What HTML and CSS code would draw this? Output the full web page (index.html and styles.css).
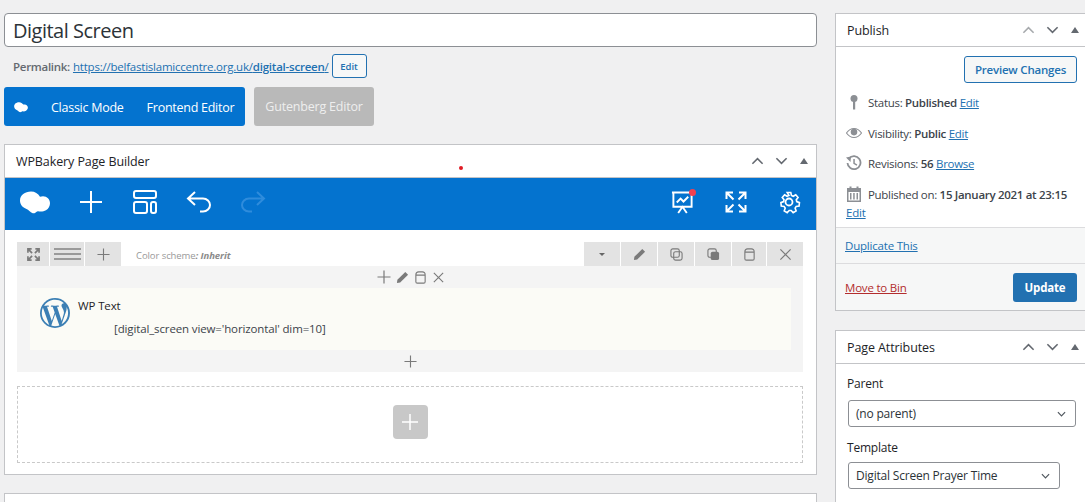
FILE: index.html
```html
<!DOCTYPE html>
<html lang="en">
<head>
<meta charset="utf-8">
<title>Digital Screen</title>
<link rel="stylesheet" href="styles.css">
</head>
<body>
<main class="main">
  <div class="title-input">Digital Screen</div>
  <div class="permalink">
    <b>Permalink:</b>
    <a href="#">https://belfastislamiccentre.org.uk/<b>digital-screen</b>/</a>
    <span class="edit-btn">Edit</span>
  </div>
  <div class="modes">
    <div class="mode-group">
      <svg class="cloud-small" viewBox="0 0 30 24"><use href="#cloud"/></svg>
      <span class="mode-a">Classic Mode</span>
      <span class="mode-b">Frontend Editor</span>
    </div>
    <div class="mode-gray">Gutenberg Editor</div>
  </div>

  <section class="builder">
    <header class="box-head">
      <h2>WPBakery Page Builder</h2>
      <i class="dot"></i>
      <div class="arrows">
        <svg viewBox="0 0 14 8"><path d="M1.5 7 7 1.500 12.500 7"/></svg>
        <svg viewBox="0 0 14 8"><path d="M1.500 1 7 6.500 12.500 1"/></svg>
        <span class="tri"></span>
      </div>
    </header>
    <div class="bluebar">
      <svg class="bb-cloud" viewBox="0 0 30 23"><path id="cloud" fill="#fff" d="M11 .5C5 .5 0 4 0 9.500c0 4 2.500 7 6.500 8.500 1.500.5 2 1.500 3.500 2.500 1.500 1.500 3.500 2.300 5 1.500 1-.5 1.500-1.500 3-1.800 2.500.5 5.500.5 8-1 2.500-1.500 4-4.200 4-7 0-4-3-7-7-7-1 0-2 .2-3 .5C18 2.500 15 .5 11 .5z"/></svg>
      <svg class="bb-ic plus" viewBox="0 0 24 24"><path d="M12 1v22M1 12h22"/></svg>
      <svg class="bb-ic layout" viewBox="0 0 24 24"><rect x="1" y="1" width="22" height="7" rx="2"/><rect x="1" y="12" width="13" height="11" rx="2"/><rect x="18" y="12" width="5" height="11" rx="2"/></svg>
      <svg class="bb-ic undo" viewBox="0 0 26 24"><path d="M9 2 2 8.500 9 15M2 8.500h15c4 0 7 3 7 6.500s-3 6.500-7 6.500h-3"/></svg>
      <svg class="bb-ic redo" viewBox="0 0 26 24"><path d="M17 2l7 6.500L17 15M24 8.500H9c-4 0-7 3-7 6.500s3 6.500 7 6.500h3"/></svg>
      <span class="grow"></span>
      <span class="present">
        <svg class="bb-ic pres" viewBox="0 0 24 24"><path d="M1 1.500h22M2.500 1.500v15h19v-15M6 12l4-4 3 3 5-5M7.500 23l4.500-6.500 4.500 6.500"/></svg>
        <i class="reddot"></i>
      </span>
      <svg class="bb-ic full" viewBox="0 0 22 22"><path d="M1.500 8V1.500H8M1.500 1.500 8.500 8.500M14 1.500h6.500V8M20.500 1.500l-7 7M1.500 14v6.500H8M1.500 20.500l7-7M14 20.500h6.500V14M20.500 20.500l-7-7"/></svg>
      <svg class="bb-ic gear" viewBox="0 0 24 24"><circle cx="12" cy="12" r="3.500"/><path d="M10 1.500h4l.7 3.200 2 .9 2.800-1.700 2.600 3-2 2.500.5 2.100 3 1.200-.4 3.800-3.200.4-1.200 1.900 1.100 3-3.300 2-2.200-2.300h-2.200l-2.200 2.300-3.300-2 1.100-3-1.200-1.900-3.200-.4-.4-3.800 3-1.200.5-2.100-2-2.500 2.600-3 2.800 1.700 2-.9z" transform="translate(1.200 1.200) scale(.9)"/></svg>
    </div>
    <div class="canvas">
      <div class="row-tools">
        <div class="tools-left">
          <span class="tab t-move"><svg viewBox="0 0 14 14"><path class="thick" d="M5.500 5.500 1 1M1 5V1h4M8.500 5.500 13 1M9 1h4v4M5.500 8.500 1 13M1 9v4h4M8.500 8.500 13 13M13 9v4H9"/></svg></span>
          <span class="tab t-lines"><i></i><i></i><i></i></span>
          <span class="tab t-plus"><svg viewBox="0 0 14 14"><path d="M7 .5v13M.5 7h13"/></svg></span>
          <span class="scheme">Color scheme<b>: Inherit</b></span>
        </div>
        <div class="tools-right">
          <span class="tab t-drop"><i class="caret"></i></span>
          <span class="tab t-ic"><svg viewBox="0 0 14 14"><path class="fill" d="M10 1l3 3-8.500 8.500L1 13l.5-3.500z"/></svg></span>
          <span class="tab t-ic"><svg viewBox="0 0 14 14"><rect x="1" y="1" width="9" height="9" rx="2"/><rect x="4" y="4" width="9" height="9" rx="2" class="paper"/></svg></span>
          <span class="tab t-ic"><svg viewBox="0 0 14 14"><rect x="1" y="1" width="9" height="9" rx="2"/><rect x="4" y="4" width="9" height="9" rx="2" class="fill"/></svg></span>
          <span class="tab t-bin"><svg viewBox="0 0 14 14"><path d="M2 4v7.500q0 1.500 1.500 1.500h7q1.500 0 1.500-1.500V4q0-3-3-3H5Q2 1 2 4zM2 4.500h10"/></svg></span>
          <span class="tab t-x"><svg viewBox="0 0 14 14"><path d="M1.500 1.500l11 11M12.500 1.500l-11 11"/></svg></span>
        </div>
      </div>
      <div class="row">
        <div class="col-tools">
          <svg class="ct-plus" viewBox="0 0 14 14"><path d="M7 .5v13M.5 7h13"/></svg>
          <svg viewBox="0 0 14 14"><path class="fill" d="M10 1l3 3-8.500 8.500L1 13l.5-3.500z"/></svg>
          <svg viewBox="0 0 14 14"><path d="M2 4v7.500q0 1.500 1.500 1.500h7q1.500 0 1.500-1.500V4q0-3-3-3H5Q2 1 2 4zM2 4.500h10"/></svg>
          <svg viewBox="0 0 14 14"><path d="M2 2l10 10M12 2 2 12"/></svg>
        </div>
        <div class="element">
          <svg class="wp" viewBox="0 0 30 30"><circle cx="15" cy="15" r="15" fill="#3c7fb4"/><path fill="#fbfbf6" d="M1.800 15c0 5.200 3 9.700 7.400 11.900L2.900 9.600A13.100 13.100 0 0 0 1.800 15zm22.100-.7c0-1.600-.6-2.800-1.100-3.600-.7-1.100-1.300-2-1.300-3.100 0-1.200.9-2.400 2.300-2.400h.2A13.200 13.200 0 0 0 4 7.800h.9c1.400 0 3.500-.2 3.500-.2.700 0 .8 1 .1 1.100 0 0-.7.100-1.500.1l4.800 14.200 2.900-8.600-2-5.600c-.7 0-1.400-.1-1.400-.1-.7 0-.6-1.100.1-1.100 0 0 2.200.2 3.500.2s3.500-.2 3.500-.2c.7 0 .8 1 .1 1.100 0 0-.7.100-1.500.1l4.700 14.100 1.300-4.500c.6-1.800 1-3.100 1-4.200zM15.200 16.100l-3.900 11.500a13.200 13.200 0 0 0 8.100-.2l-.1-.2zM26.500 8.700c.1.400.1.900.1 1.400 0 1.300-.2 2.800-1 4.700l-4 11.500A13.200 13.200 0 0 0 26.500 8.700z"/></svg>
          <div class="el-text">
            <div class="el-name">WP Text</div>
            <div class="el-code">[digital_screen view='horizontal' dim=10]</div>
          </div>
        </div>
        <div class="row-add"><svg viewBox="0 0 14 14"><path d="M7 .5v13M.5 7h13"/></svg></div>
      </div>
      <div class="dropzone">
        <span class="add-btn"><svg viewBox="0 0 16 16"><path d="M8 0v16M0 8h16"/></svg></span>
      </div>
    </div>
  </section>
  <section class="next-box"></section>
</main>

<aside class="side">
  <section class="sbox publish">
    <header class="sbox-head">
      <h2>Publish</h2>
      <div class="arrows">
        <svg class="dim" viewBox="0 0 14 8"><path d="M1.500 7 7 1.500 12.500 7"/></svg>
        <svg viewBox="0 0 14 8"><path d="M1.500 1 7 6.500 12.500 1"/></svg>
        <span class="tri"></span>
      </div>
    </header>
    <div class="pub-body">
      <div class="preview-row"><span class="preview">Preview Changes</span></div>
      <div class="pub-line l-status">
        <svg class="pic" viewBox="0 0 16 16"><circle cx="8" cy="4.500" r="3.500" class="solid"/><rect x="7" y="6" width="2.200" height="9.500" class="solid"/></svg>
        <span>Status: <b>Published</b> <a href="#">Edit</a></span>
      </div>
      <div class="pub-line l-vis">
        <svg class="pic wide" viewBox="0 0 18 12"><path d="M.5 6C3 2.500 6 1 9 1s6 1.500 8.500 5C15 9.500 12 11 9 11S3 9.500.5 6z" fill="none" stroke="#8c8f94" stroke-width="1.200"/><circle cx="9" cy="5" r="3.700" class="solid"/></svg>
        <span>Visibility: <b>Public</b> <a href="#">Edit</a></span>
      </div>
      <div class="pub-line l-rev">
        <svg class="pic" viewBox="0 0 16 16"><path d="M3 3.500A6.500 6.500 0 1 1 1.500 8" fill="none" stroke="#8c8f94" stroke-width="1.800"/><path class="solid" d="M0 2.500 4.500 7 5 1.500zM7.300 4h1.500v4l2.500 1.500-.7 1.200-3.300-2z"/></svg>
        <span>Revisions: <b>56</b> <a href="#">Browse</a></span>
      </div>
      <div class="pub-line l-date">
        <svg class="pic" viewBox="0 0 16 16"><path class="solid" d="M1 2h2.500V.5h2V2h5V.5h2V2H15v14H1zM2.500 6v8.500h11V6z"/><path class="solid" d="M4 7h1.500v6.500H4zM7.200 7h1.500v6.500H7.200zM10.500 7H12v6.500h-1.500z"/></svg>
        <span>Published on: <b>15 January 2021 at 23:15</b></span>
      </div>
      <div class="pub-edit"><a href="#">Edit</a></div>
    </div>
    <div class="pub-dup"><a href="#">Duplicate This</a></div>
    <div class="pub-actions">
      <a href="#" class="trash">Move to Bin</a>
      <span class="update">Update</span>
    </div>
  </section>
  <section class="sbox attrs">
    <header class="sbox-head">
      <h2>Page Attributes</h2>
      <div class="arrows">
        <svg viewBox="0 0 14 8"><path d="M1.500 7 7 1.500 12.500 7"/></svg>
        <svg viewBox="0 0 14 8"><path d="M1.500 1 7 6.500 12.500 1"/></svg>
        <span class="tri"></span>
      </div>
    </header>
    <div class="attr-body">
      <div class="attr-label">Parent</div>
      <div class="sel sel-parent"><span>(no parent)</span><svg viewBox="0 0 10 6"><path d="M1 1l4 4 4-4"/></svg></div>
      <div class="attr-label l2">Template</div>
      <div class="sel sel-tpl"><span>Digital Screen Prayer Time</span><svg viewBox="0 0 10 6"><path d="M1 1l4 4 4-4"/></svg></div>
    </div>
  </section>
</aside>
</body>
</html>
```
FILE: styles.css
```css
* { box-sizing: border-box; }
html, body { height: 502px; overflow: hidden; }
body {
  margin: 0;
  padding: 13px 0 0 4px;
  display: flex;
  gap: 18px;
  background: #f0f0f1;
  font-family: "Open Sans", "Noto Sans", sans-serif;
  font-size: 12px;
  letter-spacing: -0.2px;
  color: #3c434a;
}
a { color: #2271b1; }
h2 { margin: 0; font-size: 12.500px; font-weight: 400; color: #1d2327; letter-spacing: -0.1px; }
svg { display: block; fill: none; stroke: #7a7a7a; }
svg .fill { fill: #7a7a7a; stroke: none; }
svg .solid { fill: #8c8f94; stroke: none; }
.main { width: 813px; flex: none; }
.title-input {
  height: 34px; border: 1px solid #8c8f94; border-radius: 4px; background: #fff;
  font-size: 20px; line-height: 34px; padding-left: 8px; color: #2c3338; letter-spacing: -.5px;
}
.permalink { display: flex; align-items: center; height: 24px; margin-top: 7px; padding-left: 9px; font-size: 11.500px; color: #646970; letter-spacing: -.28px; }
.permalink b { font-weight: 600; }
.permalink a { margin-left: 3px; letter-spacing: -.22px; }
.edit-btn {
  margin-left: 3px; width: 35px; height: 24px; border: 1px solid #2271b1; border-radius: 3px;
  background: #f6f7f7; color: #2271b1; font-size: 9.500px; font-weight: 600; text-align: center; line-height: 23px; letter-spacing: 0;
}
.modes { display: flex; gap: 9px; margin-top: 9px; height: 39px; }
.mode-group {
  width: 241px; background: #0473cf; border-radius: 3px; color: #fff; display: flex; align-items: center;
  font-size: 12.500px; padding-top: 1px; letter-spacing: -.26px;
}
.cloud-small { width: 14px; height: 11px; margin-left: 10px; stroke: none; }
.mode-a { margin-left: 23px; }
.mode-b { margin-left: 23px; }
.mode-gray {
  width: 120px; background: #b9b9b9; border-radius: 3px; color: #eee; font-size: 12.500px;
  text-align: center; line-height: 40px;
}
.builder { margin-top: 18px; height: 331px; background: #fff; border: 1px solid #c3c4c7; position: relative; }
.box-head { height: 33px; display: flex; align-items: center; justify-content: space-between; padding: 0 8px 0 11px; border-bottom: 1px solid #c3c4c7; }
.dot { position: absolute; left: 454px; top: 21px; width: 4px; height: 4px; border-radius: 50%; background: #e01b24; }
.arrows { display: flex; align-items: center; gap: 11px; }
.arrows svg { width: 13px; height: 8px; stroke: #646970; stroke-width: 1.700; }
.arrows svg.dim { stroke: #a7aaad; }
.tri { width: 0; height: 0; border: 4px solid transparent; border-top: 0; border-bottom: 6px solid #646970; margin-left: 1px; }
.bluebar { height: 52px; background: #0473cf; display: flex; align-items: center; padding: 0 15px 4px 15px; }
.bb-cloud { width: 30px; height: 23px; stroke: none; flex: none; }
.bb-ic { stroke: #fff; stroke-width: 2; flex: none; }
.plus { width: 24px; height: 24px; margin-left: 29px; }
.layout { width: 24px; height: 24px; margin-left: 30px; }
.undo { width: 26px; height: 24px; margin-left: 29px; }
.redo { width: 26px; height: 24px; margin-left: 28px; stroke: #2f8cdc; }
.grow { flex: 1; }
.present { position: relative; display: block; }
.pres { width: 23px; height: 23px; }
.reddot { position: absolute; right: -2px; top: -2px; width: 7px; height: 7px; border-radius: 50%; background: #f2404f; }
.full { width: 22px; height: 22px; margin-left: 31px; }
.gear { width: 24px; height: 24px; margin-left: 30px; stroke-width: 1.800; }
.canvas { padding: 12px 13px 0 12px; }
.row-tools { display: flex; justify-content: space-between; height: 24px; }
.tools-left, .tools-right { display: flex; gap: 1px; }
.tab { background: #e3e3e3; display: flex; align-items: center; justify-content: center; height: 24px; }
.tab svg { width: 13px; height: 13px; stroke-width: 1.200; }
.t-move { width: 32px; }
.t-move .thick { stroke-width: 1.800; }
.t-lines { width: 34px; flex-direction: column; gap: 3px; }
.t-lines i { display: block; width: 27px; height: 2px; background: #9a9a9a; }
.t-plus { width: 36px; }
.scheme { margin-left: 14px; font-size: 9.500px; color: #999; align-self: center; padding-top: 2px; letter-spacing: -.08px; }
.scheme b { font-style: italic; font-weight: 700; color: #8b8b8b; }
.t-drop { width: 36px; }
.caret { border: 3px solid transparent; border-top: 3px solid #666; border-bottom: 0; }
.t-ic { width: 36px; }
.t-bin { width: 34px; }
.t-x { width: 36px; }
.t-x svg { stroke-width: 1.300; }
.row { background: #f4f4f4; height: 106px; padding: 0 12px 0 13px; }
.col-tools { display: flex; height: 22px; align-items: center; justify-content: flex-end; gap: 5px; padding: 0 346px 0 0; }
.col-tools svg { width: 13px; height: 13px; stroke-width: 1.200; }
.col-tools .ct-plus { width: 14px; height: 14px; }
.element { height: 62px; background: #fbfbf6; display: flex; padding: 10px 10px; }
.wp { width: 30px; height: 30px; stroke: none; flex: none; }
.el-text { margin-left: 8px; color: #1d2327; font-size: 11.500px; letter-spacing: -.13px; }
.el-name { line-height: 16px; margin-top: 0; }
.el-code { margin: 7px 0 0 36px; line-height: 16px; color: #3c434a; }
.row-add { display: flex; justify-content: center; padding: 5px 0 0 0; }
.row-add svg { width: 13px; height: 13px; stroke-width: 1.200; }
.dropzone { margin-top: 14px; height: 77px; border: 1px dashed #c9c9c9; display: flex; align-items: center; justify-content: center; padding-bottom: 6px; }
.add-btn { width: 35px; height: 34px; border-radius: 4px; background: #c8c8c8; display: flex; align-items: center; justify-content: center; }
.add-btn svg { width: 16px; height: 16px; stroke: #fff; stroke-width: 1.500; }
.next-box { margin-top: 18px; height: 30px; background: #fff; border: 1px solid #c3c4c7; }
.side { width: 250px; flex: none; overflow: hidden; }
.sbox { background: #fff; border: 1px solid #c3c4c7; width: 254px; }
.sbox-head { height: 33px; display: flex; align-items: center; justify-content: space-between; padding: 0 9px 0 11px; border-bottom: 1px solid #c3c4c7; }
.pub-body { padding: 9px 11px 0 10px; height: 180px; }
.preview-row { display: flex; justify-content: flex-end; }
.preview {
  width: 113px; height: 27px; border: 1px solid #2271b1; border-radius: 3px; background: #f6f7f7;
  color: #2271b1; font-weight: 600; text-align: center; line-height: 25px; font-size: 11.500px;
}
.pub-line { display: flex; align-items: center; height: 20px; font-size: 11.500px; letter-spacing: -.3px; }
.pub-line b { font-weight: 600; }
.pic { width: 16px; height: 16px; margin-right: 6px; flex: none; stroke: none; }
.pic.wide { height: 12px; }
.l-status { margin-top: 9px; }
.l-vis { margin-top: 11px; }
.l-rev { margin-top: 10px; }
.l-date { margin-top: 11px; }
.pub-edit { font-size: 11.500px; line-height: 18px; }
.pub-dup { height: 37px; background: #f6f7f7; border-top: 1px solid #dcdcde; border-bottom: 1px solid #dcdcde; padding-left: 9px; line-height: 35px; font-size: 11.500px; }
.pub-actions { height: 46px; background: #f6f7f7; display: flex; align-items: center; justify-content: space-between; padding: 0 11px 0 9px; font-size: 11.500px; }
.trash { color: #b32d2e; }
.update { width: 64px; height: 29px; background: #2271b1; border-radius: 3px; color: #fff; font-weight: 700; text-align: center; line-height: 29px; }
.attrs { margin-top: 19px; height: 175px; }
.attr-body { padding: 11px 0 0 11px; font-size: 12px; }
.attr-label { line-height: 18px; color: #1d2327; }
.l2 { margin-top: 12px; }
.sel { display: flex; align-items: center; justify-content: space-between; height: 27px; border: 1px solid #8c8f94; border-radius: 3px; margin: 7px 0 0 1px; padding: 0 9px 0 7px; color: #2c3338; background: #fff; font-size: 12px; }
.l2 + .sel { margin-top: 5px; }
.sel svg { width: 9px; height: 6px; stroke: #50575e; stroke-width: 1.300; }
.sel-parent { width: 228px; }
.sel-tpl { width: 212px; }
```
